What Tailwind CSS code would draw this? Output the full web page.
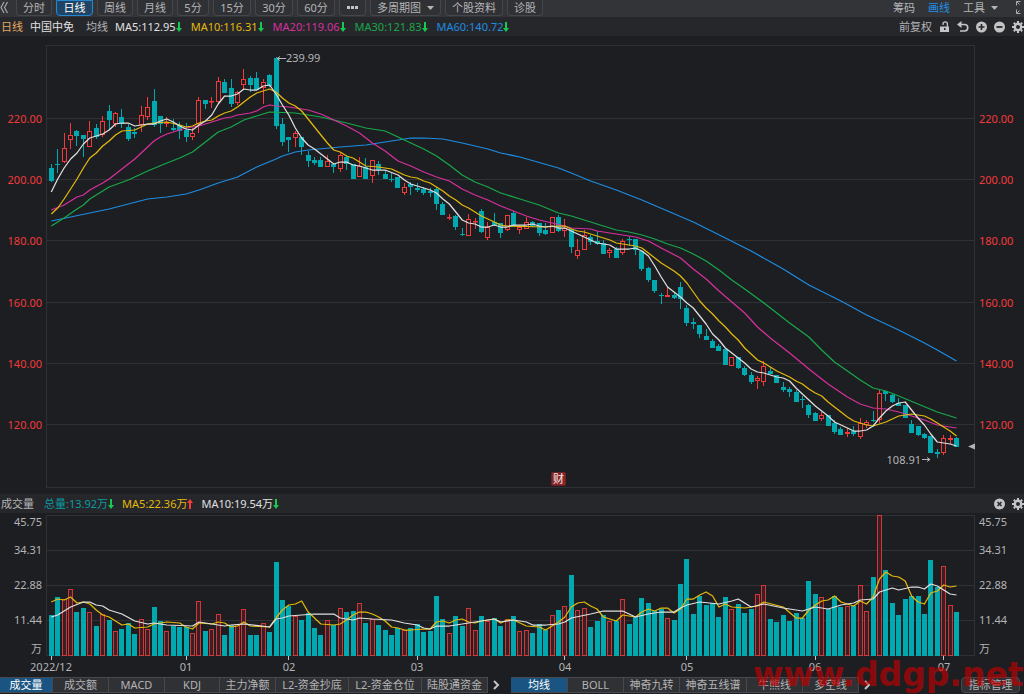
<!DOCTYPE html>
<html lang="zh-CN">
<head>
<meta charset="utf-8">
<meta name="viewport" content="width=device-width, initial-scale=1">
<title>中国中免 日线</title>
<script src="https://cdn.jsdelivr.net/npm/@tailwindcss/browser@4"></script>
</head>
<body class="relative min-h-screen overflow-x-hidden bg-[#1d1e22] font-['Noto_Sans','Noto_Sans_CJK_SC',sans-serif] text-[11px] leading-4 text-[#b4b4b6] whitespace-nowrap">

<!-- Period toolbar -->
<nav class="flex h-[17px] items-start justify-between bg-[#333438]">
  <div class="flex h-4 items-stretch gap-1">
    <button class="w-3" aria-label="收起"><svg class="block" width="9" height="16" viewBox="0 0 9 16" fill="none" stroke="#a8a8aa" stroke-width="1.2"><path d="M4 2 1 7.500 4 13M7.500 2 4.500 7.500 7.500 13"/></svg></button>
    <button class="w-9 rounded-b-sm border border-t-0 border-[#45464b] bg-[#303135]">分时</button>
    <button class="w-[37px] rounded-b-sm border border-[#2587cf] bg-[#204463] leading-[14px] text-white">日线</button>
    <button class="w-9 rounded-b-sm border border-t-0 border-[#45464b] bg-[#303135]">周线</button>
    <button class="w-9 rounded-b-sm border border-t-0 border-[#45464b] bg-[#303135]">月线</button>
    <button class="w-8 rounded-b-sm border border-t-0 border-[#45464b] bg-[#303135]">5分</button>
    <button class="w-[38px] rounded-b-sm border border-t-0 border-[#45464b] bg-[#303135]">15分</button>
    <button class="w-[38px] rounded-b-sm border border-t-0 border-[#45464b] bg-[#303135]">30分</button>
    <button class="w-[38px] rounded-b-sm border border-t-0 border-[#45464b] bg-[#303135]">60分</button>
    <button class="flex w-[27px] items-center justify-center rounded-b-sm border border-t-0 border-[#45464b] bg-[#303135]" aria-label="更多周期"><svg width="12" height="3" fill="#c4c4c6"><path d="M0 0h3v3H0zM4 0h3v3H4zM8 0h3v3H8z"/></svg></button>
    <button class="flex w-[71px] items-center justify-center gap-[6px] rounded-b-sm border border-t-0 border-[#45464b] bg-[#303135]">多周期图<svg width="7" height="4" fill="#b4b4b6"><path d="M0 0h7L3.500 4z"/></svg></button>
    <button class="w-[58px] rounded-b-sm border border-t-0 border-[#45464b] bg-[#303135]">个股资料</button>
    <button class="w-9 rounded-b-sm border border-t-0 border-[#45464b] bg-[#303135]">诊股</button>
  </div>
  <div class="flex h-4 items-center gap-[13px]">
    <button>筹码</button>
    <button class="text-[#1e90e6]">画线</button>
    <button class="flex items-center gap-[6px]">工具<svg width="7" height="4" fill="#b4b4b6"><path d="M0 0h7L3.500 4z"/></svg></button>
    <button aria-label="全屏" class="ml-1"><svg class="block" width="9" height="16" viewBox="0 0 9 16" fill="none" stroke="#a8a8aa"><path d="M1.500 5.500v-4h4M1.500 1.500l3 3M1.500 9.500v4h4M1.500 13.500l3-3"/></svg></button>
  </div>
</nav>

<!-- Moving-average readout -->
<header class="flex h-[19px] items-center justify-between bg-[#26272b] pl-px">
  <div class="flex items-center gap-[7px]">
    <span class="text-[#e6a863]">日线</span>
    <h1 class="text-[#e0e0e0]">中国中免</h1>
    <span class="ml-[5px]">均线</span>
    <div class="flex items-center gap-[9px]">
      <span class="flex items-center text-[#e0e0e0]">MA5:112.95<svg width="6" height="12" fill="#17c950"><path d="M2 1h2v6h2L3 11 0 7h2z"/></svg></span>
      <span class="flex items-center text-[#e3b90b]">MA10:116.31<svg width="6" height="12" fill="#17c950"><path d="M2 1h2v6h2L3 11 0 7h2z"/></svg></span>
      <span class="flex items-center text-[#d6309c]">MA20:119.06<svg width="6" height="12" fill="#17c950"><path d="M2 1h2v6h2L3 11 0 7h2z"/></svg></span>
      <span class="flex items-center text-[#18a84a]">MA30:121.83<svg width="6" height="12" fill="#17c950"><path d="M2 1h2v6h2L3 11 0 7h2z"/></svg></span>
      <span class="flex items-center text-[#1e8ce0]">MA60:140.72<svg width="6" height="12" fill="#17c950"><path d="M2 1h2v6h2L3 11 0 7h2z"/></svg></span>
    </div>
  </div>
  <div class="flex items-center gap-[7px]">
    <button>前复权</button>
    <button aria-label="锁定"><svg class="block" width="11" height="12" viewBox="0 0 11 12"><path d="M4 4V3a2.200 2.200 0 0 1 4.400 0v3" fill="none" stroke="#c4c4c6" stroke-width="1.300"/><path d="M1 5.500h9V11H1z" fill="#c4c4c6"/><path d="M5 7h1.500v2H5z" fill="#26272b"/></svg></button>
    <button aria-label="撤销"><svg class="block" width="12" height="12" viewBox="0 0 12 12"><path d="M3 3.500h4.500a3 3 0 0 1 0 6.500H3" fill="none" stroke="#c4c4c6" stroke-width="1.600"/><path d="M0 3.500 4.500 0v7z" fill="#c4c4c6"/></svg></button>
    <button aria-label="放大"><svg class="block" width="11" height="12" viewBox="0 0 11 12"><circle cx="5.500" cy="6" r="5.500" fill="#c4c4c6"/><path d="M2.500 6h6M5.500 3v6" stroke="#26272b" stroke-width="1.600"/></svg></button>
    <button aria-label="缩小"><svg class="block" width="11" height="12" viewBox="0 0 11 12"><circle cx="5.500" cy="6" r="5.500" fill="#c4c4c6"/><path d="M2.500 6h6" stroke="#26272b" stroke-width="1.800"/></svg></button>
    <button aria-label="设置"><svg class="block" width="12" height="12" viewBox="0 0 12 12"><circle cx="6" cy="6" r="3.200" fill="none" stroke="#c4c4c6" stroke-width="2.400"/><path d="M6 0v2M6 10v2M0 6h2M10 6h2M1.800 1.800l1.400 1.400M8.800 8.800l1.400 1.400M10.200 1.800 8.800 3.200M3.200 8.800l-1.400 1.400" stroke="#c4c4c6" stroke-width="2"/></svg></button>
  </div>
</header>

<main>
  <svg id="price" class="block h-auto w-full" viewBox="0 36 1024 458" role="img" aria-label="日K线图"></svg>

  <section class="flex h-[19px] items-center justify-between bg-[#26272b] pl-px">
    <div class="flex items-center gap-[8px]">
      <h2>成交量</h2>
      <span class="ml-[2px] flex items-center text-[#0b9ba0]">总量:13.92万<svg width="6" height="12" fill="#17c950"><path d="M2 1h2v6h2L3 11 0 7h2z"/></svg></span>
      <span class="flex items-center text-[#e3b90b]">MA5:22.36万<svg width="6" height="12" fill="#fb3b3b"><path d="M2 11h2V5h2L3 1 0 5h2z"/></svg></span>
      <span class="flex items-center text-[#e0e0e0]">MA10:19.54万<svg width="6" height="12" fill="#17c950"><path d="M2 1h2v6h2L3 11 0 7h2z"/></svg></span>
    </div>
    <div class="flex items-center gap-[7px]">
      <button aria-label="关闭"><svg class="block" width="11" height="12" viewBox="0 0 11 12"><circle cx="5.500" cy="6" r="5.500" fill="#c4c4c6"/><path d="m3.500 4 4 4M7.500 4l-4 4" stroke="#26272b" stroke-width="1.600"/></svg></button>
      <button aria-label="成交量设置"><svg class="block" width="12" height="12" viewBox="0 0 12 12"><circle cx="6" cy="6" r="3.200" fill="none" stroke="#c4c4c6" stroke-width="2.400"/><path d="M6 0v2M6 10v2M0 6h2M10 6h2M1.800 1.800l1.400 1.400M8.800 8.800l1.400 1.400M10.200 1.800 8.800 3.200M3.200 8.800l-1.400 1.400" stroke="#c4c4c6" stroke-width="2"/></svg></button>
    </div>
  </section>

  <svg id="volume" class="block h-auto w-full" viewBox="0 513 1024 164" role="img" aria-label="成交量图"></svg>
</main>

<!-- Indicator tabs -->
<footer class="flex h-4 items-stretch justify-between">
  <div class="flex">
    <div class="flex border-y border-[#48494e] bg-[#303135] leading-[14px]">
      <button class="w-[53px] border-r border-[#48494e] bg-[#1a5482] text-white">成交量</button>
      <button class="w-14 border-r border-[#48494e]">成交额</button>
      <button class="w-14 border-r border-[#48494e]">MACD</button>
      <button class="w-[55px] border-r border-[#48494e]">KDJ</button>
      <button class="w-14 border-r border-[#48494e]">主力净额</button>
      <button class="w-[73px] border-r border-[#48494e]">L2-资金抄底</button>
      <button class="w-[73px] border-r border-[#48494e]">L2-资金仓位</button>
      <button class="w-[66px] border-r border-[#48494e]">陆股通资金</button>
    </div>
    <button class="flex w-[23px] items-center justify-center pr-2" aria-label="更多副图指标"><svg width="8" height="10" fill="none" stroke="#c4c4c6" stroke-width="2"><path d="m2 1 4 4-4 4"/></svg></button>
    <div class="flex border-y border-[#48494e] bg-[#303135] leading-[14px]">
      <button class="w-[57px] border-r border-[#48494e] bg-[#1a5482] text-white">均线</button>
      <button class="w-14 border-r border-[#48494e]">BOLL</button>
      <button class="w-14 border-r border-[#48494e]">神奇九转</button>
      <button class="w-[67px] border-r border-[#48494e]">神奇五线谱</button>
      <button class="w-14 border-r border-[#48494e]">牛熊线</button>
      <button class="w-14 border-r border-[#48494e]">多空线</button>
    </div>
    <button class="flex w-5 items-center justify-center pr-1" aria-label="更多主图指标"><svg width="8" height="10" fill="none" stroke="#c4c4c6" stroke-width="2"><path d="m2 1 4 4-4 4"/></svg></button>
  </div>
  <button class="mr-1 w-[59px] rounded-sm border border-[#48494e] bg-[#303135] leading-[14px]">指标管理</button>
</footer>

<!-- Watermark -->
<div class="pointer-events-none absolute right-0 bottom-0 w-[271px] font-['DejaVu_Sans'] text-[33px] leading-[38px] font-bold text-[#c00000]/65" aria-hidden="true">www.ddgp.net</div>

<script>
const UP = '#f23a3a', DOWN = '#00a8b0', GRID = '#303135';
// Candles: [high, low, body top, body bottom, rising]
const candles = [
[164,182,168,181,0],[149,173,164,165,0],[133,163,148,162,1],[123,149,135,140,1],[130,146,131,136,0],[135,157,135,139,0],[121,147,131,147,1],[124,139,128,137,0],[116,137,121,135,1],[105,129,111,120,0],
[112,127,113,124,1],[109,128,117,124,0],[124,141,127,139,0],[128,138,132,134,0],[106,132,115,125,1],[97,120,107,117,1],[89,127,101,125,0],[116,133,116,124,0],[117,127,122,124,1],[119,131,128,130,0],
[122,139,125,131,0],[123,142,130,137,0],[128,140,133,137,1],[97,133,100,124,1],[100,109,100,104,0],[97,108,101,102,1],[77,103,81,102,1],[79,93,82,93,0],[79,107,88,104,0],[91,105,92,103,1],
[69,90,79,85,1],[76,92,78,85,0],[72,90,78,90,0],[79,104,82,88,1],[74,87,75,86,0],[57,129,58,126,0],[118,146,124,142,0],[137,152,137,140,0],[131,147,133,138,1],[137,155,137,147,0],
[151,167,155,161,0],[157,165,160,163,0],[157,167,160,167,0],[155,167,161,167,1],[164,173,164,167,0],[152,172,155,169,1],[155,170,157,164,0],[164,179,164,179,0],[157,177,166,177,1],[158,179,167,179,0],
[160,183,160,176,1],[161,175,164,170,0],[170,179,174,179,0],[173,182,179,180,0],[177,188,177,188,0],[183,195,187,193,1],[182,195,184,187,0],[183,192,188,190,0],[187,195,189,193,0],[188,197,191,193,0],
[187,210,189,204,0],[202,215,204,215,0],[214,220,217,218,1],[215,230,216,227,0],[228,236,234,235,0],[214,236,219,236,1],[218,229,221,222,1],[209,233,211,232,0],[222,240,227,238,1],[213,226,222,225,0],
[223,238,223,233,0],[215,231,215,230,1],[211,226,213,226,0],[225,234,227,230,1],[217,229,222,229,1],[221,227,222,226,0],[223,236,223,233,0],[223,235,230,234,0],[217,233,217,233,1],[215,232,217,231,0],
[219,237,228,231,1],[228,253,229,247,0],[239,259,250,256,1],[230,250,235,250,1],[235,245,237,242,0],[231,245,241,244,0],[240,254,243,254,0],[248,258,250,253,1],[247,258,249,258,0],[239,255,241,253,1],
[236,246,239,240,0],[239,255,239,250,0],[251,271,251,269,0],[267,282,268,280,0],[280,293,280,291,0],[293,304,295,296,0],[287,297,295,297,1],[293,299,295,298,0],[282,309,287,299,0],[305,326,308,323,0],
[318,329,322,324,0],[325,338,325,334,0],[329,340,336,340,0],[339,348,341,348,0],[344,351,346,351,0],[349,365,349,365,0],[357,366,357,366,1],[357,369,357,368,0],[366,376,368,375,0],[372,384,375,382,0],
[376,389,378,381,1],[361,386,366,382,1],[367,374,371,374,0],[375,383,375,383,0],[382,392,387,390,0],[387,397,389,392,0],[390,402,392,402,0],[396,408,399,400,0],[404,418,405,415,0],[412,421,413,421,0],
[412,421,415,419,1],[415,426,415,426,0],[420,434,423,432,0],[427,435,429,435,0],[428,437,432,434,1],[426,436,431,434,0],[418,439,423,437,1],[420,428,422,425,1],[411,422,420,421,0],[390,423,393,420,1],
[391,401,391,394,0],[394,403,395,402,0],[398,406,403,406,0],[405,418,405,418,0],[420,433,424,433,0],[426,436,426,435,0],[433,439,434,438,0],[436,453,436,453,0],[449,458,452,454,0],[435,455,438,453,1],
[435,444,438,440,1],[437,447,438,447,0]];
// Top of each volume bar
const volumes = [615,597,599,589,612,608,612,626,614,620,631,629,623,634,619,629,607,621,631,626,627,627,633,601,631,629,614,635,625,624,609,635,635,623,632,562,600,606,616,620,613,628,635,620,625,608,612,611,603,623,619,625,630,635,628,630,628,624,632,631,596,619,633,616,626,608,630,616,621,618,626,619,616,631,630,633,624,630,615,610,606,575,610,608,627,621,615,621,621,599,624,617,598,603,611,609,618,620,584,559,614,596,605,603,617,597,609,604,613,609,594,585,619,622,615,621,613,618,581,594,597,609,596,607,606,606,585,611,577,515,570,603,615,599,596,596,614,560,587,566,605,612];

// Averages: alternating candle index and y
const lines = {
price: [
['#1e8ce0',[0,221,3,217,6,213,9,209,12,204,15,199,18,197,21,194,23,190,26,183,29,177,32,167,35,159,36,156,38,152,40,150,45,147,49,145,52,142,54,140,56,138,58,138,61,139,64,143,68,149,70,153,73,157,79,168,81,173,84,181,88,190,92,200,96,211,100,222,105,238,109,251,114,269,118,285,123,301,127,315,132,330,136,343,138,350,141,361]],
['#18a84a',[0,226,2,218,4,209,5,205,6,199,9,187,12,180,15,171,18,163,20,158,22,152,24,142,26,132,28,127,30,120,32,116,34,112,38,113,40,115,42,117,44,120,46,123,49,128,52,131,54,137,56,143,58,149,60,156,62,165,64,175,66,182,68,187,70,193,73,199,76,205,79,213,81,216,84,222,86,226,88,230,90,232,92,235,94,239,96,244,98,248,100,254,102,261,104,270,106,280,108,289,111,303,113,313,115,323,118,337,120,350,122,362,124,371,126,380,128,388,130,391,132,396,135,404,138,412,141,418]],
['#d6309c',[0,210,2,205,4,197,5,195,6,190,8,183,9,179,10,174,11,169,12,164,13,159,14,153,15,147,16,141,17,137,18,134,19,132,20,130,21,128,22,127,23,126,24,124,25,122,26,120,27,118,28,117,29,115,30,114,31,113,32,111,33,107,34,105,35,106,37,107,39,109,40,110,41,112,42,114,43,117,44,120,46,126,48,133,50,143,52,151,54,161,56,166,58,172,60,177,62,181,64,189,66,195,68,200,70,206,72,211,74,216,76,220,78,223,80,226,81,228,84,229,85,231,88,234,91,237,93,241,95,248,98,258,100,269,102,279,104,291,106,302,108,313,110,327,112,338,115,353,118,369,121,384,124,397,126,404,128,408,130,409,132,412,134,416,136,420,138,425,141,428]],
['#e3b90b',[0,214,1,208,2,199,3,189,4,179,5,168,6,158,7,153,8,146,9,141,10,135,11,131,13,130,14,127,15,124,16,123,18,122,20,125,21,127,22,126,23,123,24,121,25,120,26,116,27,113,28,111,29,107,30,102,31,97,32,93,33,91,34,89,35,92,36,98,37,103,38,106,39,111,40,119,41,127,42,135,43,143,44,150,45,152,46,156,47,158,48,162,49,166,51,167,52,168,53,169,54,172,55,175,56,177,57,178,58,181,59,183,60,187,61,191,62,196,63,200,64,205,65,208,66,212,67,216,68,219,69,222,70,225,71,226,77,227,79,226,80,226,81,229,82,231,83,232,84,234,85,236,86,238,87,240,88,243,89,244,90,245,91,246,92,248,93,253,94,258,95,263,96,267,97,271,98,276,99,283,100,292,101,301,102,308,103,314,104,321,105,327,106,334,107,340,108,348,109,354,110,360,111,363,112,367,113,371,114,374,115,377,116,381,117,384,118,389,119,393,120,396,121,402,122,407,123,412,124,417,125,421,126,423,127,425,128,426,129,424,130,422,131,419,132,416,133,415,134,414,135,415,136,416,137,419,138,423,139,427,140,431,141,436]],
['#e0e0e0',[0,192,1,179,2,168,3,159,4,153,5,144,6,138,8,134,9,130,10,124,11,123,12,123,13,126,15,124,16,124,17,121,18,119,19,122,20,126,21,129,22,130,23,125,24,121,25,115,26,104,27,96,28,96,29,94,30,89,31,90,32,90,33,86,34,85,35,94,36,105,37,115,38,128,39,138,40,145,41,149,42,154,43,159,44,164,45,162,46,162,47,165,48,166,49,168,50,170,52,170,54,175,55,180,56,184,57,186,58,188,59,190,60,193,61,199,62,204,63,212,64,220,65,223,66,224,67,227,68,227,69,225,70,227,71,227,72,225,74,225,75,224,76,226,77,227,78,226,79,228,80,228,81,231,82,234,83,237,84,240,85,243,86,244,87,245,88,249,90,249,91,248,92,251,93,256,94,266,95,277,96,287,97,292,98,297,99,303,100,308,101,316,102,324,103,334,104,340,105,348,106,353,107,358,108,363,109,369,110,372,111,373,112,375,113,377,114,378,115,381,116,388,117,394,118,400,119,406,120,411,121,416,122,422,123,425,124,428,125,431,126,431,127,430,128,426,129,418,130,411,131,406,132,403,133,402,134,410,135,418,136,425,137,434,138,442,139,443,140,444,141,446]]],
volume: [
['#e3b90b',[0,602,1,599,2,600,3,597,4,603,5,602,6,604,7,610,8,615,9,617,10,621,11,625,12,624,13,628,15,627,16,624,18,622,20,623,21,627,22,629,23,623,25,624,26,622,27,623,28,627,29,626,30,622,31,626,34,627,35,618,36,610,37,605,38,604,39,601,40,612,41,618,42,624,44,625,45,624,46,620,47,615,48,612,49,612,50,614,51,617,52,621,53,627,54,628,55,630,56,630,58,629,59,629,60,622,61,621,62,623,63,620,64,619,65,622,66,623,67,621,69,619,70,623,71,620,72,620,73,623,74,626,76,627,77,630,78,626,79,622,80,617,81,607,82,603,83,602,84,606,85,609,86,617,87,619,88,621,89,615,91,617,92,612,93,609,94,611,95,608,96,608,97,613,98,609,99,599,100,599,101,595,102,592,103,596,104,607,105,604,106,607,108,608,110,606,111,602,114,607,116,618,117,618,118,610,119,605,120,601,121,600,122,596,123,602,125,606,126,601,127,604,128,597,129,579,130,572,131,576,132,577,133,581,134,596,135,602,136,604,137,593,138,591,139,585,140,587,141,586]],
['#e0e0e0',[0,617,1,615,3,607,5,602,6,602,7,605,8,606,9,610,11,614,13,621,15,624,16,623,18,625,22,626,23,622,27,626,28,625,30,624,34,627,35,619,36,618,37,616,41,614,44,614,45,618,47,620,48,618,50,619,53,620,55,623,57,625,58,628,59,629,60,626,62,626,64,624,66,622,69,619,70,622,72,620,74,622,75,625,77,625,79,624,80,622,81,618,84,614,86,611,89,611,91,617,93,614,95,612,97,612,98,608,99,605,101,602,104,604,106,601,107,599,108,603,109,607,111,604,114,608,117,611,119,607,121,609,123,605,125,603,126,600,128,599,129,592,131,588,132,590,134,587,135,587,136,589,137,584,138,586,139,590,140,594,141,595]]]
};
const center = i => 51.3 + i * 6.42;
const rect = (x, y, w, h, a) => `<rect x="${x}" y="${y}" width="${w}" height="${h}" ${a}/>`;
const text = (x, y, s, fill, anchor = 'start') => `<text x="${x}" y="${y}" fill="${fill}" text-anchor="${anchor}">${s}</text>`;
const hline = (y, c = GRID) => rect(47, y, 928, 1, `fill="${c}"`);
const poly = ([c, p]) => {
  let s = '';
  for (let k = 0; k < p.length; k += 2) s += center(p[k]).toFixed(1) + ',' + p[k + 1] + ' ';
  return `<polyline points="${s}" fill="none" stroke="${c}" stroke-width="1.25" stroke-linejoin="round"/>`;
};
const body = (x, y, h, up) => up ? rect(x + .5, y + .5, 4, Math.max(h - 1, .5), `fill="#1d1e22" stroke="${UP}"`) : rect(x, y, 5, Math.max(h, 1), `fill="${DOWN}"`);

let p = rect(46.5, 45.5, 928, 442, `fill="none" stroke="${GRID}"`);
[[118,220],[179,200],[240,180],[302,160],[363,140],[424,120]].forEach(([y, v]) => {
  p += hline(y) + text(42, y + 5, v + '.00', UP, 'end') + text(979, y + 5, v + '.00', UP);
});
candles.forEach(([hi, lo, top, bot, up], i) => {
  const x = Math.round(center(i) - 2.5);
  p += rect(x + 2, hi, 1, lo - hi, `fill="${up ? UP : DOWN}"`) + body(x, top, bot - top, up);
});
p += lines.price.map(poly).join('');
p += '<path d="M286 58.500h-9m3-2-3 2 3 2M922 459.500h8m-3-2 3 2-3 2" fill="none" stroke="#b4b4b6"/>';
p += text(286, 62, '239.99', '#b4b4b6') + text(921, 464, '108.91', '#b4b4b6', 'end');
p += '<path d="M968 446.500l7-3v6z" fill="#b4b4b6"/>';
p += rect(551.5, 472.5, 14, 13, 'rx="1" fill="#8c2426" stroke="#6b2023"') + text(558.5, 483, '财', '#eee', 'middle');
document.getElementById('price').innerHTML = p;

let v = rect(46.5, 515.5, 928, 140, `fill="none" stroke="${GRID}"`);
[550, 585, 620].forEach(y => v += hline(y));
[[526,'45.75'],[554,'34.31'],[589,'22.88'],[624,'11.44'],[653,'万']].forEach(([y, s]) => {
  v += text(42, y, s, '#b4b4b6', 'end') + text(979, y, s, '#b4b4b6');
});
volumes.forEach((y, i) => {
  const x = Math.round(center(i) - 2.5);
  v += candles[i][4] ? rect(x + .5, y + .5, 4, 655 - y, `fill="#3a2024" stroke="${UP}" stroke-opacity=".85"`) : rect(x, y, 5, 656 - y, `fill="${DOWN}"`);
});
v += lines.volume.map(poly).join('');
[[0,'2022/12'],[21,'01'],[37,'02'],[57,'03'],[80,'04'],[99,'05'],[119,'06'],[139,'07']].forEach(([i, s]) => {
  v += rect(Math.round(center(i) - .5), 656, 1, 4, 'fill="#c4c4c6"') + text(Math.round(center(i)), 671, s, '#b4b4b6', 'middle');
});
document.getElementById('volume').innerHTML = v;
</script>
</body>
</html>
